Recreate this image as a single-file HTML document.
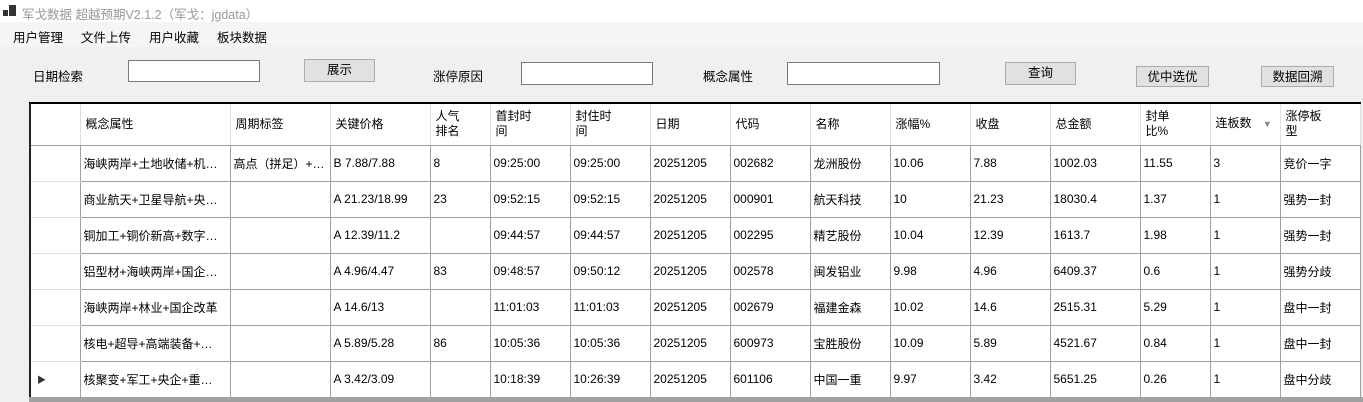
<!DOCTYPE html><html><head><meta charset="utf-8"><style>
*{margin:0;padding:0;box-sizing:border-box}
body{width:1363px;height:402px;overflow:hidden;background:#f0f0f0;font-family:"Liberation Sans","Noto Sans CJK SC",sans-serif;font-size:12px;color:#000;position:relative}
.a{position:absolute}
.title{left:0;top:0;width:1363px;height:22px;background:#fff;color:#999;font-size:12.5px}
.menu{left:0;top:22px;width:1363px;height:25px;background:#f5f5f5}
.menu span{position:absolute;top:5px;font-size:12.5px}
.inp{background:#fff;border:1px solid #7a7a7a}
.btn{background:#e1e1e1;border:1px solid #adadad;text-align:center;font-size:12.5px}
.lbl{font-size:12.5px}
table{position:absolute;left:29px;top:102px;border-collapse:collapse;table-layout:fixed;background:#fff;border-top:2px solid #000;border-left:2px solid #222}
td{height:36px;border:1px solid #a0a0a0;padding:0 3px;white-space:nowrap;overflow:hidden;font-size:12px}
tr.h td{height:42px;border-color:#e0e0e0;border-bottom:1px solid #a0a0a0;line-height:15px;padding:0 5px}
td.rh{border-color:#e0e0e0;border-right:1px solid #a0a0a0}
</style></head><body>
<div class="a title"><svg class="a" style="left:3px;top:5px" width="14" height="12"><rect x="0" y="5" width="5" height="6" fill="#333"/><rect x="6" y="0" width="7" height="11" fill="#333"/></svg><span class="a" style="left:22px;top:4px">军戈数据 超越预期V2.1.2（军戈：jgdata）</span></div>
<div class="a menu"><span style="left:13px">用户管理</span><span style="left:81px">文件上传</span><span style="left:149px">用户收藏</span><span style="left:217px">板块数据</span></div>
<span class="a lbl" style="left:33px;top:66px">日期检索</span>
<div class="a inp" style="left:128px;top:60px;width:132px;height:22px"></div>
<div class="a btn" style="left:304px;top:59px;width:71px;height:23px;line-height:20px">展示</div>
<span class="a lbl" style="left:433px;top:66px">涨停原因</span>
<div class="a inp" style="left:521px;top:62px;width:132px;height:23px"></div>
<span class="a lbl" style="left:703px;top:66px">概念属性</span>
<div class="a inp" style="left:787px;top:62px;width:153px;height:23px"></div>
<div class="a btn" style="left:1005px;top:62px;width:71px;height:23px;line-height:20px">查询</div>
<div class="a btn" style="left:1136px;top:66px;width:73px;height:21px;line-height:20px">优中选优</div>
<div class="a btn" style="left:1261px;top:66px;width:73px;height:21px;line-height:20px">数据回溯</div>
<table>
<colgroup><col style="width:50px"><col style="width:150px"><col style="width:100px"><col style="width:100px"><col style="width:60px"><col style="width:80px"><col style="width:80px"><col style="width:80px"><col style="width:80px"><col style="width:80px"><col style="width:80px"><col style="width:80px"><col style="width:90px"><col style="width:70px"><col style="width:70px"><col style="width:80px"></colgroup>
<tr class="h"><td class="rh"></td><td>概念属性</td><td>周期标签</td><td>关键价格</td><td>人气<br>排名</td><td>首封时<br>间</td><td>封住时<br>间</td><td>日期</td><td>代码</td><td>名称</td><td>涨幅%</td><td>收盘</td><td>总金额</td><td>封单<br>比%</td><td>连板数 <span style="color:#888;font-size:9px;margin-left:8px">▼</span></td><td>涨停板<br>型</td></tr>
<tr><td class="rh"></td><td>海峡两岸+土地收储+机…</td><td>高点（拼足）+…</td><td>B 7.88/7.88</td><td>8</td><td>09:25:00</td><td>09:25:00</td><td>20251205</td><td>002682</td><td>龙洲股份</td><td>10.06</td><td>7.88</td><td>1002.03</td><td>11.55</td><td>3</td><td>竞价一字</td></tr>
<tr><td class="rh"></td><td>商业航天+卫星导航+央…</td><td></td><td>A 21.23/18.99</td><td>23</td><td>09:52:15</td><td>09:52:15</td><td>20251205</td><td>000901</td><td>航天科技</td><td>10</td><td>21.23</td><td>18030.4</td><td>1.37</td><td>1</td><td>强势一封</td></tr>
<tr><td class="rh"></td><td>铜加工+铜价新高+数字…</td><td></td><td>A 12.39/11.2</td><td></td><td>09:44:57</td><td>09:44:57</td><td>20251205</td><td>002295</td><td>精艺股份</td><td>10.04</td><td>12.39</td><td>1613.7</td><td>1.98</td><td>1</td><td>强势一封</td></tr>
<tr><td class="rh"></td><td>铝型材+海峡两岸+国企…</td><td></td><td>A 4.96/4.47</td><td>83</td><td>09:48:57</td><td>09:50:12</td><td>20251205</td><td>002578</td><td>闽发铝业</td><td>9.98</td><td>4.96</td><td>6409.37</td><td>0.6</td><td>1</td><td>强势分歧</td></tr>
<tr><td class="rh"></td><td>海峡两岸+林业+国企改革</td><td></td><td>A 14.6/13</td><td></td><td>11:01:03</td><td>11:01:03</td><td>20251205</td><td>002679</td><td>福建金森</td><td>10.02</td><td>14.6</td><td>2515.31</td><td>5.29</td><td>1</td><td>盘中一封</td></tr>
<tr><td class="rh"></td><td>核电+超导+高端装备+…</td><td></td><td>A 5.89/5.28</td><td>86</td><td>10:05:36</td><td>10:05:36</td><td>20251205</td><td>600973</td><td>宝胜股份</td><td>10.09</td><td>5.89</td><td>4521.67</td><td>0.84</td><td>1</td><td>盘中一封</td></tr>
<tr><td class="rh" style="font-size:9px;color:#333;padding-left:6px">▶</td><td>核聚变+军工+央企+重…</td><td></td><td>A 3.42/3.09</td><td></td><td>10:18:39</td><td>10:26:39</td><td>20251205</td><td>601106</td><td>中国一重</td><td>9.97</td><td>3.42</td><td>5651.25</td><td>0.26</td><td>1</td><td>盘中分歧</td></tr>
</table>
<div class="a" style="left:29px;top:397px;width:1334px;height:5px;background:#a0a0a0"></div>
</body></html>
